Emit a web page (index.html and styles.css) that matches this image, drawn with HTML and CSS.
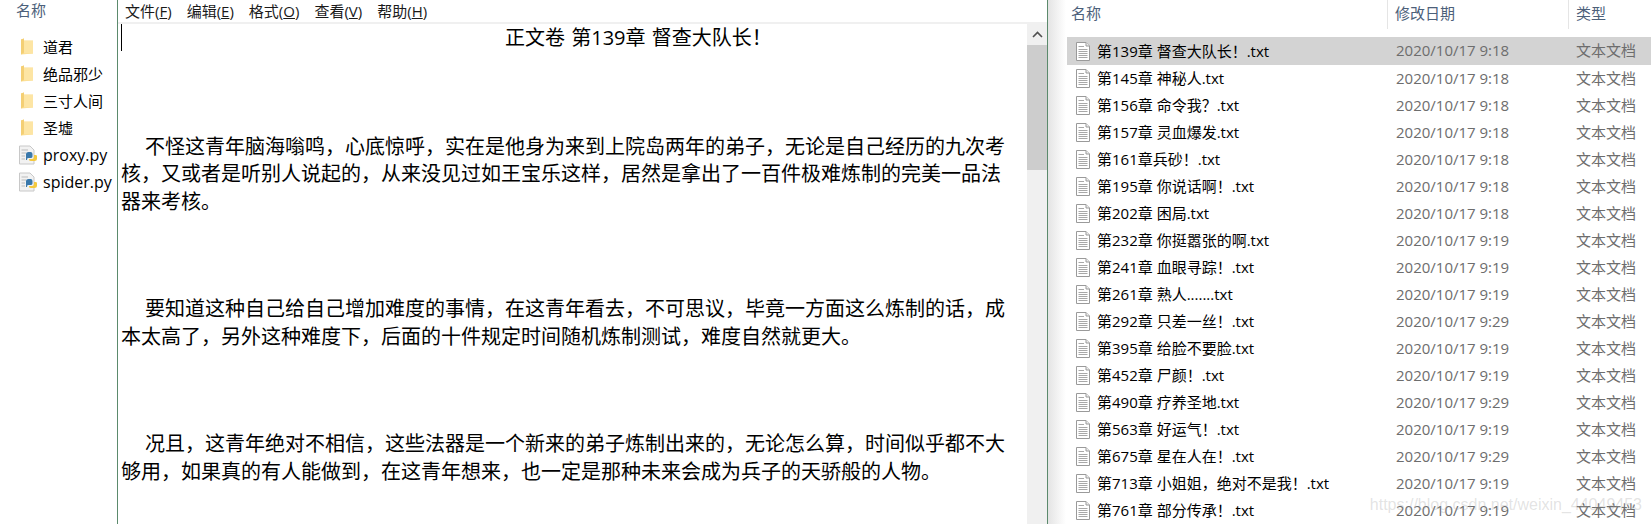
FILE: index.html
```html
<!DOCTYPE html>
<html>
<head>
  <title>记事本</title>
  <link rel="stylesheet" href="styles.css">
</head>
<body>
  <svg class="defs" width="0" height="0">
    <symbol id="folder" viewBox="0 0 14 17">
      <path d="M1 1.5 L4 0.5 L4 2.5 L13 2.5 L13 15.5 L1 16.5 Z" fill="#fbdc8b"/>
      <path d="M4 0.5 L4 14.5 L1 16.5 L1 1.5 Z" fill="#f4cf74"/>
      <path d="M4 3 L13 3 L13 15.5 L4 15.5 Z" fill="#fde5a4"/>
    </symbol>
    <symbol id="pyfile" viewBox="0 0 20 20">
      <path d="M1.5 1 L12 1 L16 5 L16 19 L1.5 19 Z" fill="#f2f2f2" stroke="#c8c8c8"/>
      <path d="M3.5 5 H10 M3.5 8 H8 M3.5 11 H7 M3.5 14 H7" stroke="#bbb"/>
      <path d="M8 12 V9 Q8 7 10.5 7 H12.5 Q14.5 7 14.5 9 V11.5 Q14.5 13 12.5 13 H10 Q9 13 9 15 H8 Z" fill="#3a78ab"/>
      <path d="M19 11 V14 Q19 16 16.5 16 H13 Q11 16 11 14.5 V14 H14 Q16 14 16 12 V10 H17.5 Q19 10 19 11 Z" fill="#f4c93f"/>
    </symbol>
    <symbol id="txtfile" viewBox="0 0 16 19">
      <path d="M1.5 0.5 H11 L14.5 4 V18.5 H1.5 Z" fill="#fff" stroke="#9a9a9a"/>
      <path d="M11 0.5 V4 H14.5" fill="#eee" stroke="#9a9a9a"/>
      <path d="M3.5 4.5 H9 M3.5 7.5 H12.5 M3.5 9.5 H12.5 M3.5 11.5 H12.5 M3.5 13.5 H12.5 M3.5 15.5 H12.5" stroke="#a8a8a8"/>
    </symbol>
  </svg>

  <div class="screen">
    <!-- left explorer -->
    <div class="left-pane">
      <div class="left-head">名称</div>
      <ul class="tree">
        <li><svg class="ico-folder"><use href="#folder"/></svg>道君</li>
        <li><svg class="ico-folder"><use href="#folder"/></svg>绝品邪少</li>
        <li><svg class="ico-folder"><use href="#folder"/></svg>三寸人间</li>
        <li><svg class="ico-folder"><use href="#folder"/></svg>圣墟</li>
        <li class="py"><svg class="ico-py"><use href="#pyfile"/></svg>proxy.py</li>
        <li class="py"><svg class="ico-py"><use href="#pyfile"/></svg>spider.py</li>
      </ul>
    </div>

    <!-- notepad -->
    <div class="notepad">
      <div class="menu">
        <span>文件(<u>F</u>)</span>
        <span>编辑(<u>E</u>)</span>
        <span>格式(<u>O</u>)</span>
        <span>查看(<u>V</u>)</span>
        <span>帮助(<u>H</u>)</span>
      </div>
      <div class="edit-wrap">
        <div class="text">
          <i class="caret"></i>
          <div class="title">正文卷 第139章 督查大队长！</div>
          <p class="para">不怪这青年脑海嗡鸣，心底惊呼，实在是他身为来到上院岛两年的弟子，无论是自己经历的九次考<br>核，又或者是听别人说起的，从来没见过如王宝乐这样，居然是拿出了一百件极难炼制的完美一品法<br>器来考核。</p>
          <p class="para">要知道这种自己给自己增加难度的事情，在这青年看去，不可思议，毕竟一方面这么炼制的话，成<br>本太高了，另外这种难度下，后面的十件规定时间随机炼制测试，难度自然就更大。</p>
          <p class="para">况且，这青年绝对不相信，这些法器是一个新来的弟子炼制出来的，无论怎么算，时间似乎都不大<br>够用，如果真的有人能做到，在这青年想来，也一定是那种未来会成为兵子的天骄般的人物。</p>
        </div>
        <div class="scrollbar">
          <div class="arrow"><svg width="11" height="7" viewBox="0 0 11 7"><path d="M1 6 L5.5 1.5 L10 6" fill="none" stroke="#505050" stroke-width="1.6"/></svg></div>
          <div class="thumb"></div>
        </div>
      </div>
    </div>

    <!-- right explorer -->
    <div class="right-pane">
      <div class="col-head">
        <div class="c-name">名称</div>
        <div class="c-date">修改日期</div>
        <div class="c-type">类型</div>
      </div>
      <ul class="files">
        <li class="sel"><div class="c-name"><svg class="ico-txt"><use href="#txtfile"/></svg>第139章 督查大队长！.txt</div><div class="c-date">2020/10/17 9:18</div><div class="c-type">文本文档</div></li>
        <li><div class="c-name"><svg class="ico-txt"><use href="#txtfile"/></svg>第145章 神秘人.txt</div><div class="c-date">2020/10/17 9:18</div><div class="c-type">文本文档</div></li>
        <li><div class="c-name"><svg class="ico-txt"><use href="#txtfile"/></svg>第156章 命令我？.txt</div><div class="c-date">2020/10/17 9:18</div><div class="c-type">文本文档</div></li>
        <li><div class="c-name"><svg class="ico-txt"><use href="#txtfile"/></svg>第157章 灵血爆发.txt</div><div class="c-date">2020/10/17 9:18</div><div class="c-type">文本文档</div></li>
        <li><div class="c-name"><svg class="ico-txt"><use href="#txtfile"/></svg>第161章兵砂！.txt</div><div class="c-date">2020/10/17 9:18</div><div class="c-type">文本文档</div></li>
        <li><div class="c-name"><svg class="ico-txt"><use href="#txtfile"/></svg>第195章 你说话啊！.txt</div><div class="c-date">2020/10/17 9:18</div><div class="c-type">文本文档</div></li>
        <li><div class="c-name"><svg class="ico-txt"><use href="#txtfile"/></svg>第202章 困局.txt</div><div class="c-date">2020/10/17 9:18</div><div class="c-type">文本文档</div></li>
        <li><div class="c-name"><svg class="ico-txt"><use href="#txtfile"/></svg>第232章 你挺嚣张的啊.txt</div><div class="c-date">2020/10/17 9:19</div><div class="c-type">文本文档</div></li>
        <li><div class="c-name"><svg class="ico-txt"><use href="#txtfile"/></svg>第241章 血眼寻踪！.txt</div><div class="c-date">2020/10/17 9:19</div><div class="c-type">文本文档</div></li>
        <li><div class="c-name"><svg class="ico-txt"><use href="#txtfile"/></svg>第261章 熟人.......txt</div><div class="c-date">2020/10/17 9:19</div><div class="c-type">文本文档</div></li>
        <li><div class="c-name"><svg class="ico-txt"><use href="#txtfile"/></svg>第292章 只差一丝！.txt</div><div class="c-date">2020/10/17 9:29</div><div class="c-type">文本文档</div></li>
        <li><div class="c-name"><svg class="ico-txt"><use href="#txtfile"/></svg>第395章 给脸不要脸.txt</div><div class="c-date">2020/10/17 9:19</div><div class="c-type">文本文档</div></li>
        <li><div class="c-name"><svg class="ico-txt"><use href="#txtfile"/></svg>第452章 尸颜！.txt</div><div class="c-date">2020/10/17 9:19</div><div class="c-type">文本文档</div></li>
        <li><div class="c-name"><svg class="ico-txt"><use href="#txtfile"/></svg>第490章 疗养圣地.txt</div><div class="c-date">2020/10/17 9:29</div><div class="c-type">文本文档</div></li>
        <li><div class="c-name"><svg class="ico-txt"><use href="#txtfile"/></svg>第563章 好运气！.txt</div><div class="c-date">2020/10/17 9:19</div><div class="c-type">文本文档</div></li>
        <li><div class="c-name"><svg class="ico-txt"><use href="#txtfile"/></svg>第675章 星在人在！.txt</div><div class="c-date">2020/10/17 9:29</div><div class="c-type">文本文档</div></li>
        <li><div class="c-name"><svg class="ico-txt"><use href="#txtfile"/></svg>第713章 小姐姐，绝对不是我！.txt</div><div class="c-date">2020/10/17 9:19</div><div class="c-type">文本文档</div></li>
        <li><div class="c-name"><svg class="ico-txt"><use href="#txtfile"/></svg>第761章 部分传承！.txt</div><div class="c-date">2020/10/17 9:19</div><div class="c-type">文本文档</div></li>
      </ul>
      <div class="watermark">https://blog.csdn.net/weixin_44049453</div>
    </div>
  </div>
</body>
</html>
```

FILE: styles.css
```css
html, body {
  margin: 0;
  padding: 0;
  height: 524px;
  overflow: hidden;
  background: #fff;
}

body {
  font-family: "Open Sans", "Noto Sans CJK SC", sans-serif;
  color: #000;
}

.defs {
  position: absolute;
}

ul {
  list-style: none;
  margin: 0;
  padding: 0;
}

.screen {
  display: flex;
  height: 524px;
}

/* left explorer */
.left-pane {
  width: 117px;
  flex: none;
  overflow: hidden;
}

.left-head {
  padding-left: 16px;
  height: 20px;
  line-height: 20px;
  font-size: 15px;
  color: #4c607a;
}

.tree {
  padding-top: 13px;
}

.tree li {
  display: flex;
  align-items: center;
  height: 27px;
  padding-left: 20px;
  font-size: 15px;
  white-space: nowrap;
}

.tree li.py {
  font-size: 16px;
}

.ico-folder {
  width: 14px;
  height: 17px;
  margin-right: 9px;
}

.ico-py {
  width: 20px;
  height: 20px;
  margin: 0 5px 0 -2px;
  flex: none;
}

/* notepad */
.notepad {
  width: 929px;
  flex: none;
  border-left: 1px solid #5b8a6c;
  border-right: 1px solid #5b8a6c;
  display: flex;
  flex-direction: column;
}

.menu {
  display: flex;
  height: 21px;
  padding-bottom: 1px;
  align-items: center;
  padding-left: 7px;
  gap: 15px;
  font-size: 15px;
  color: #1a1a1a;
  border-bottom: 2px solid #f0f0f0;
}

.edit-wrap {
  flex: 1;
  display: flex;
  min-height: 0;
}

.text {
  position: relative;
  flex: 1;
  padding-left: 3px;
  font-size: 20px;
  line-height: 27.5px;
  white-space: nowrap;
  color: #000;
}

.caret {
  position: absolute;
  left: 3px;
  top: 0;
  width: 1px;
  height: 27px;
  background: #000;
}

.title {
  padding-left: 384px;
  word-spacing: 1px;
}

.para {
  margin: 80px 0 0;
  text-indent: 24px;
}

.title + .para {
  margin-top: 81px;
}

.scrollbar {
  width: 20px;
  flex: none;
  background: #f0f0f0;
}

.arrow {
  height: 21px;
  display: flex;
  align-items: center;
  justify-content: center;
}

.thumb {
  height: 125px;
  background: #cdcdcd;
}

/* right explorer */
.right-pane {
  position: relative;
  flex: 1;
  min-width: 0;
  background: linear-gradient(to right, #e4e4e4 0, #fff 18px);
}

.col-head {
  display: flex;
  height: 29px;
  line-height: 27px;
  font-size: 15px;
  color: #4c607a;
  margin-bottom: 8px;
}

.col-head .c-name {
  width: 340px;
  padding-left: 23px;
  border-right: 1px solid #e5e5e5;
  box-sizing: border-box;
}

.col-head .c-date {
  width: 181px;
  padding-left: 7px;
  border-right: 1px solid #e5e5e5;
  box-sizing: border-box;
}

.col-head .c-type {
  padding-left: 7px;
}

.files {
  margin-left: 19px;
}

.files li {
  display: flex;
  height: 27px;
  line-height: 27px;
  font-size: 15px;
  white-space: nowrap;
}

.files li.sel {
  background: #d3d3d3;
  height: 28px;
}

.files .c-name {
  display: flex;
  align-items: center;
  width: 329px;
  padding-left: 8px;
  box-sizing: border-box;
}

.files .c-date {
  width: 180px;
  color: #6d6d6d;
}

.files .c-type {
  color: #6d6d6d;
}

.ico-txt {
  width: 16px;
  height: 19px;
  margin-right: 6px;
  flex: none;
}

.watermark {
  position: absolute;
  right: 9px;
  bottom: 10px;
  font-family: "Liberation Sans", sans-serif;
  font-size: 16px;
  color: rgba(160, 160, 160, 0.3);
  white-space: nowrap;
}
```
